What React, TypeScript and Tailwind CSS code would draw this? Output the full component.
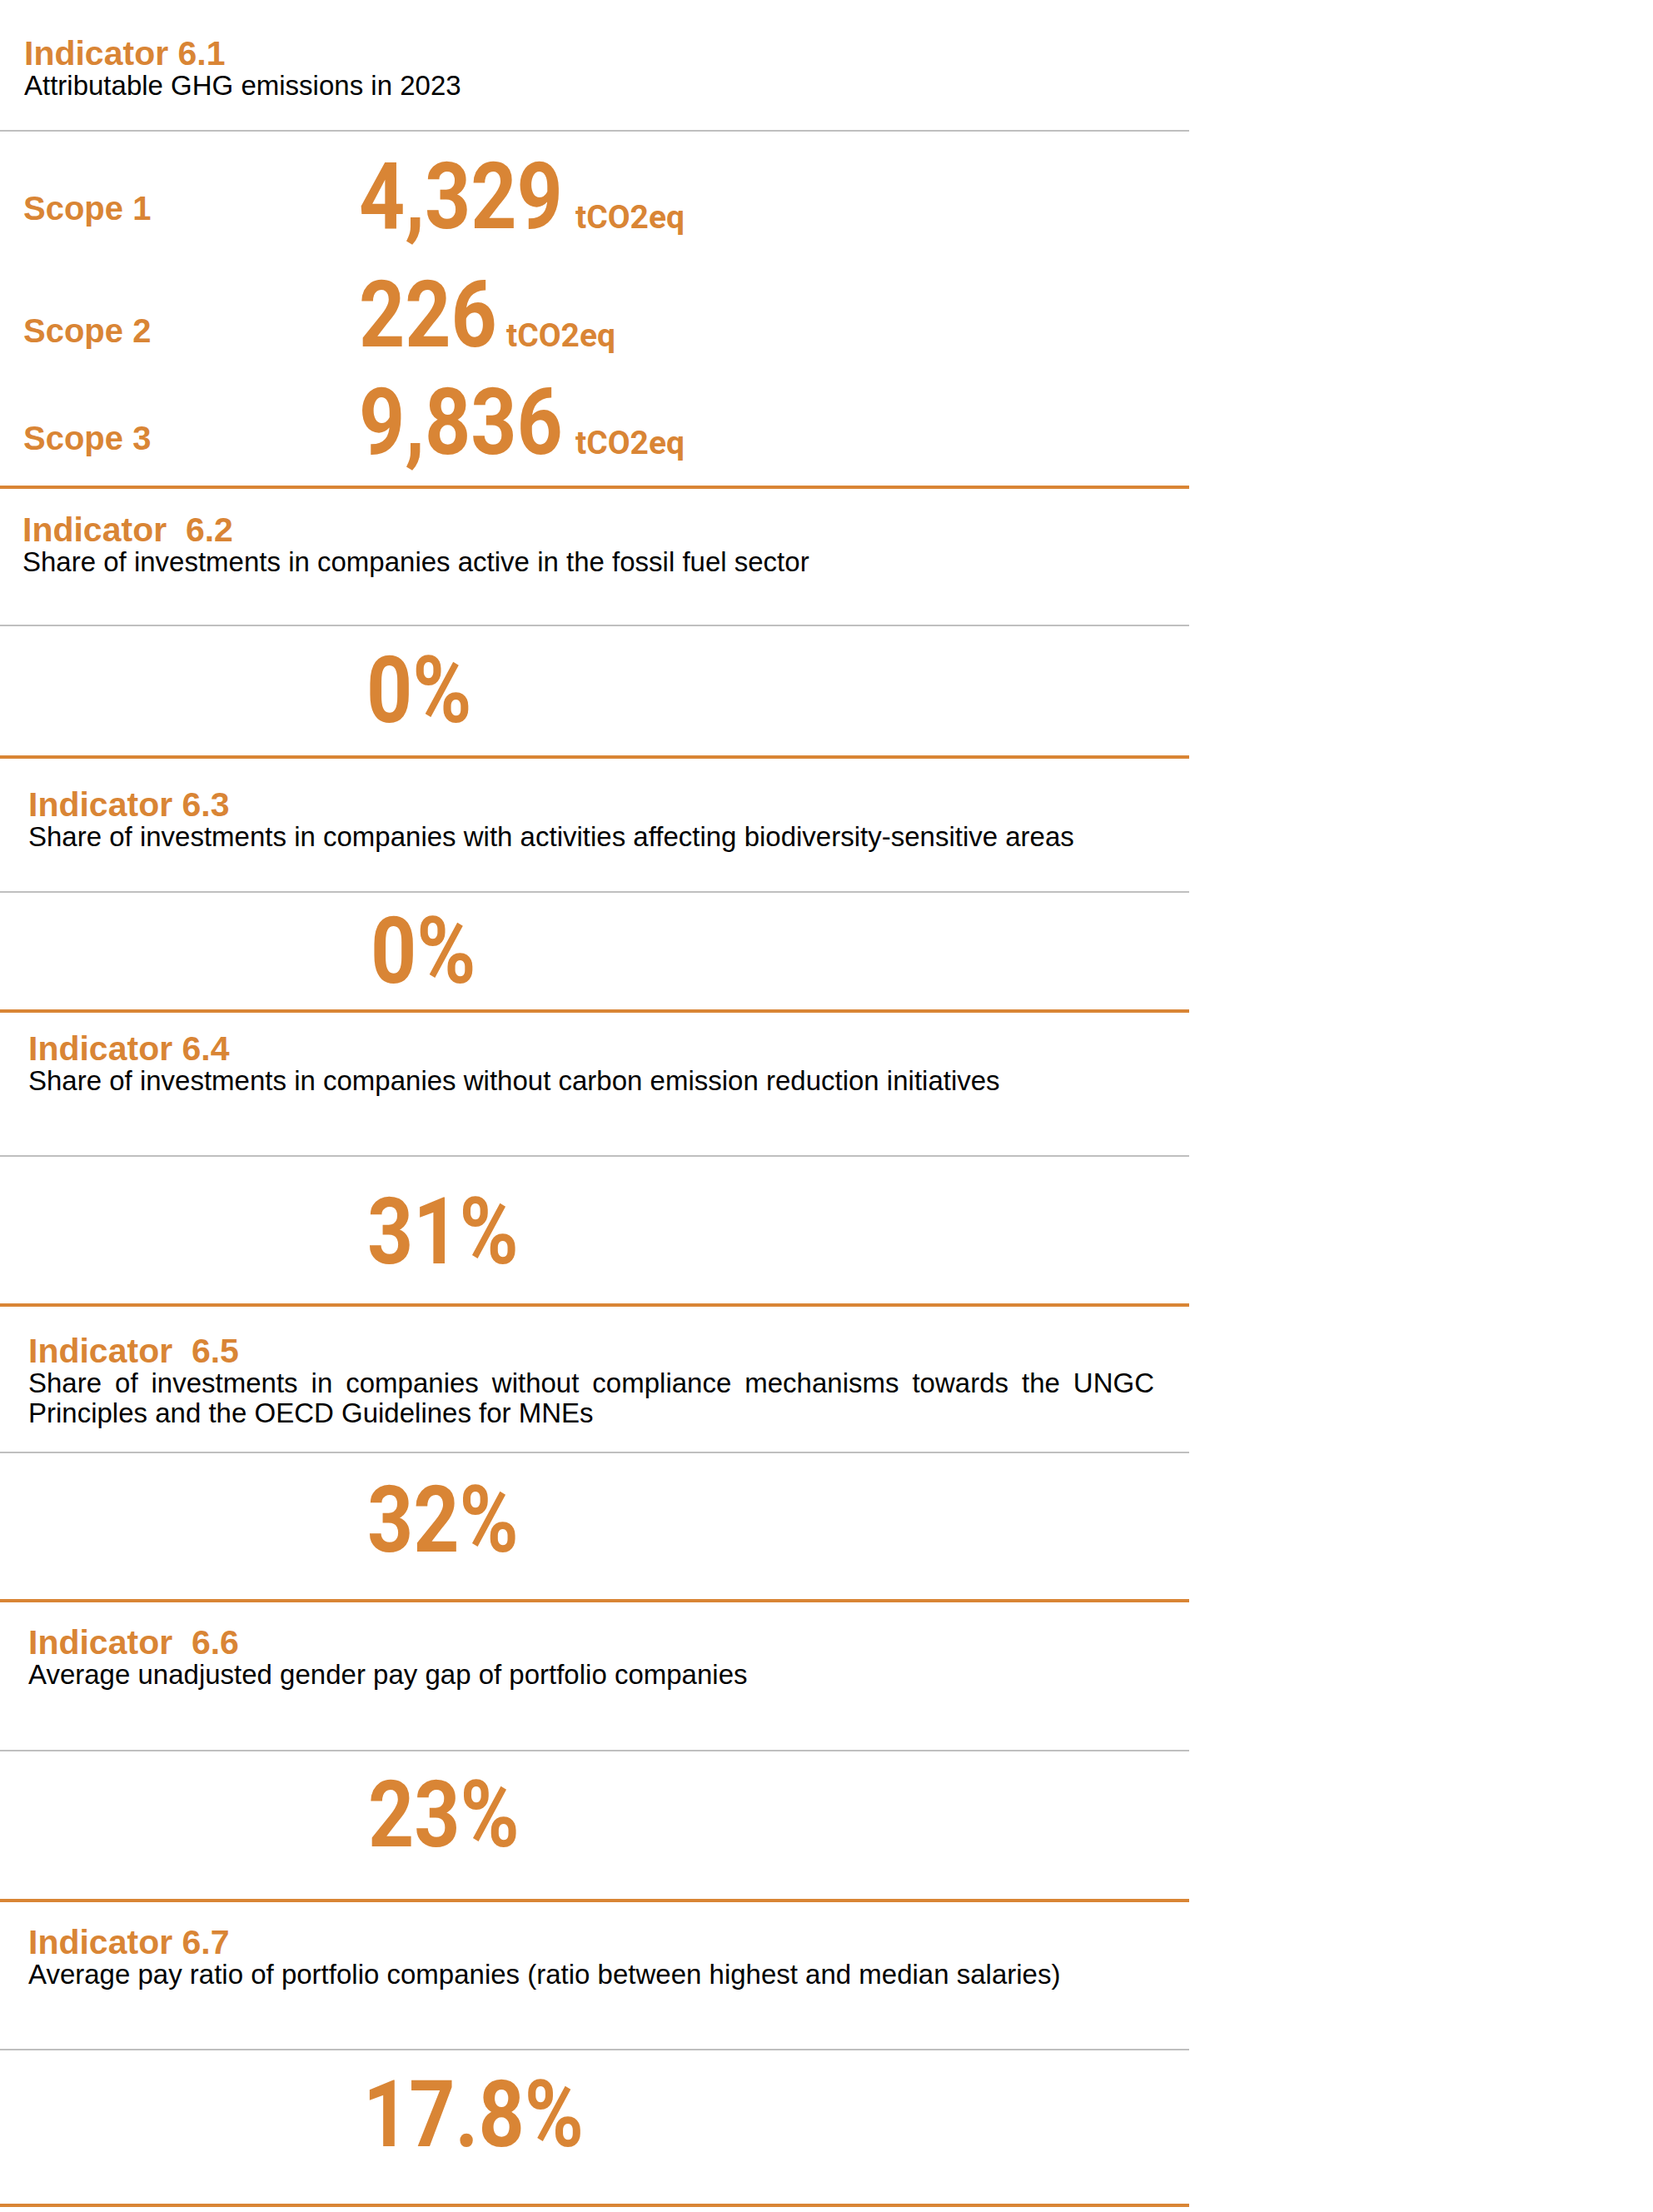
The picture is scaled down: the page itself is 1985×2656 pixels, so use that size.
import React from "react";

type Indicator = {
  title: string;
  text: string;
  value: string;
  head: string;
  body: string;
};

type Scope = {
  label: string;
  value: string;
  row: string;
  label_pt: string;
  num_w: string;
};

const SCOPES: Scope[] = [
  { label: "Scope 1", value: "4,329", row: "mt-0", label_pt: "pt-[50px]", num_w: "w-[260px]" },
  { label: "Scope 2", value: "226", row: "mt-[30px]", label_pt: "pt-[55px]", num_w: "w-[177px]" },
  { label: "Scope 3", value: "9,836", row: "mt-[17px]", label_pt: "pt-[55px]", num_w: "w-[260px]" },
];

// heights include the 2px grey rule at the bottom of each header
const INDICATORS: Indicator[] = [
  {
    title: "Indicator\u00a0 6.2",
    text: "Share of investments in companies active in the fossil fuel sector",
    value: "0%",
    head: "h-[165px] pt-[29px] pl-[27px]",
    body: "h-[155px] pt-[21px] pl-[440px]",
  },
  {
    title: "Indicator 6.3",
    text: "Share of investments in companies with activities affecting biodiversity-sensitive areas",
    value: "0%",
    head: "h-[161px] pt-[35px] pl-[34px]",
    body: "h-[140px] pt-[14px] pl-[445px]",
  },
  {
    title: "Indicator 6.4",
    text: "Share of investments in companies without carbon emission reduction initiatives",
    value: "31%",
    head: "h-[173px] pt-[23px] pl-[34px]",
    body: "h-[176px] pt-[34px] pl-[441px]",
  },
  {
    title: "Indicator\u00a0 6.5",
    text: "Share of investments in companies without compliance mechanisms towards the UNGC Principles and the OECD Guidelines for MNEs",
    value: "32%",
    head: "h-[176px] pt-[33px] pl-[34px]",
    body: "h-[175px] pt-[24px] pl-[441px]",
  },
  {
    title: "Indicator\u00a0 6.6",
    text: "Average unadjusted gender pay gap of portfolio companies",
    value: "23%",
    head: "h-[179px] pt-[28px] pl-[34px]",
    body: "h-[177px] pt-[20px] pl-[442px]",
  },
  {
    title: "Indicator 6.7",
    text: "Average pay ratio of portfolio companies (ratio between highest and median salaries)",
    value: "17.8%",
    head: "h-[178px] pt-[28px] pl-[34px]",
    body: "h-[184px] pt-[21px] pl-[436px]",
  },
];

const Title = ({ children }: { children: React.ReactNode }) => (
  <h2 className="font-['Liberation_Sans',Arial,sans-serif] text-[41px] leading-[41px] font-bold text-[#d98535]">
    {children}
  </h2>
);

const Big = ({ children }: { children: React.ReactNode }) => (
  <span className="inline-block origin-left scale-x-[0.86] font-['Roboto',sans-serif] text-[112px] leading-[112px] font-bold text-[#d98535] whitespace-nowrap">
    {children}
  </span>
);

const App = () => {
  return (
    <div className="min-h-screen bg-white">
      <div className="w-[1428px]">
        {/* 6.1 — emissions by scope */}
        <section className="border-b-4 border-[#d98535]">
          <div className="h-[158px] pt-[44px] pl-[29px] border-b-2 border-[#bfbfbf]">
            <Title>Indicator 6.1</Title>
            <p className="font-['Liberation_Sans',Arial,sans-serif] text-[33px] leading-[36px] text-black">
              Attributable GHG emissions in 2023
            </p>
          </div>
          <div className="h-[425px] pt-[22px]">
            {SCOPES.map((s) => (
              <div key={s.label} className={`flex items-start ${s.row}`}>
                <div className={`w-[431px] pl-[28px] ${s.label_pt} font-['Liberation_Sans',Arial,sans-serif] text-[40px] leading-[40px] font-bold text-[#d98535]`}>
                  {s.label}
                </div>
                <div className="flex items-baseline">
                  <div className={s.num_w}>
                    <Big>{s.value}</Big>
                  </div>
                  <span className="font-['Roboto',sans-serif] text-[39px] leading-none font-bold text-[#d98535]">
                    tCO2eq
                  </span>
                </div>
              </div>
            ))}
          </div>
        </section>

        {INDICATORS.map((ind) => (
          <section key={ind.title} className="border-b-4 border-[#d98535]">
            <div className={`${ind.head} border-b-2 border-[#bfbfbf]`}>
              <Title>{ind.title}</Title>
              <p className="max-w-[1352px] text-justify font-['Liberation_Sans',Arial,sans-serif] text-[33px] leading-[36px] text-black">
                {ind.text}
              </p>
            </div>
            <div className={ind.body}>
              <Big>{ind.value}</Big>
            </div>
          </section>
        ))}
      </div>
    </div>
  );
};

export default App;
